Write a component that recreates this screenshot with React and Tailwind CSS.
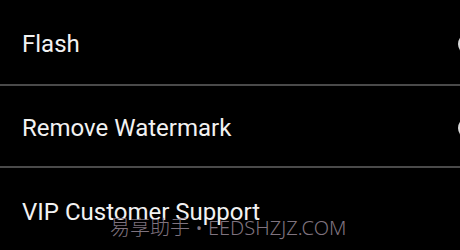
import React from 'react'

const rows = [
  { label: 'Flash', cls: 'h-[84px] pt-[4px]' },
  { label: 'Remove Watermark', cls: 'h-[80px] pt-[3px]' },
  { label: 'VIP Customer Support', cls: 'h-[82px] pt-[5px]' },
]

export default function App() {
  return (
    <div className="relative w-[460px] h-[250px] overflow-hidden bg-black font-['Roboto',sans-serif]">
      {rows.map((r, i) => (
        <div key={r.label}>
          <div className={'flex items-center justify-between pl-[22px] ' + r.cls}>
            <span className="text-[24px] leading-none text-[#f2f2f2]">{r.label}</span>
            {i < 2 && (
              <span className="w-[22px] h-[22px] -mr-[20px] rounded-full bg-[#d8d8d8]" />
            )}
          </div>
          {i < 2 && <div className="h-[2px] bg-[#4a4a4a]" />}
        </div>
      ))}

      {/* watermark */}
      <div className="absolute left-[110px] top-[218px] text-[20px] leading-none font-light text-[#7f737f] font-['Noto_Sans','Noto_Sans_CJK_SC',sans-serif] whitespace-nowrap">
        易享助手 • EEDSHZJZ.COM
      </div>
    </div>
  )
}
